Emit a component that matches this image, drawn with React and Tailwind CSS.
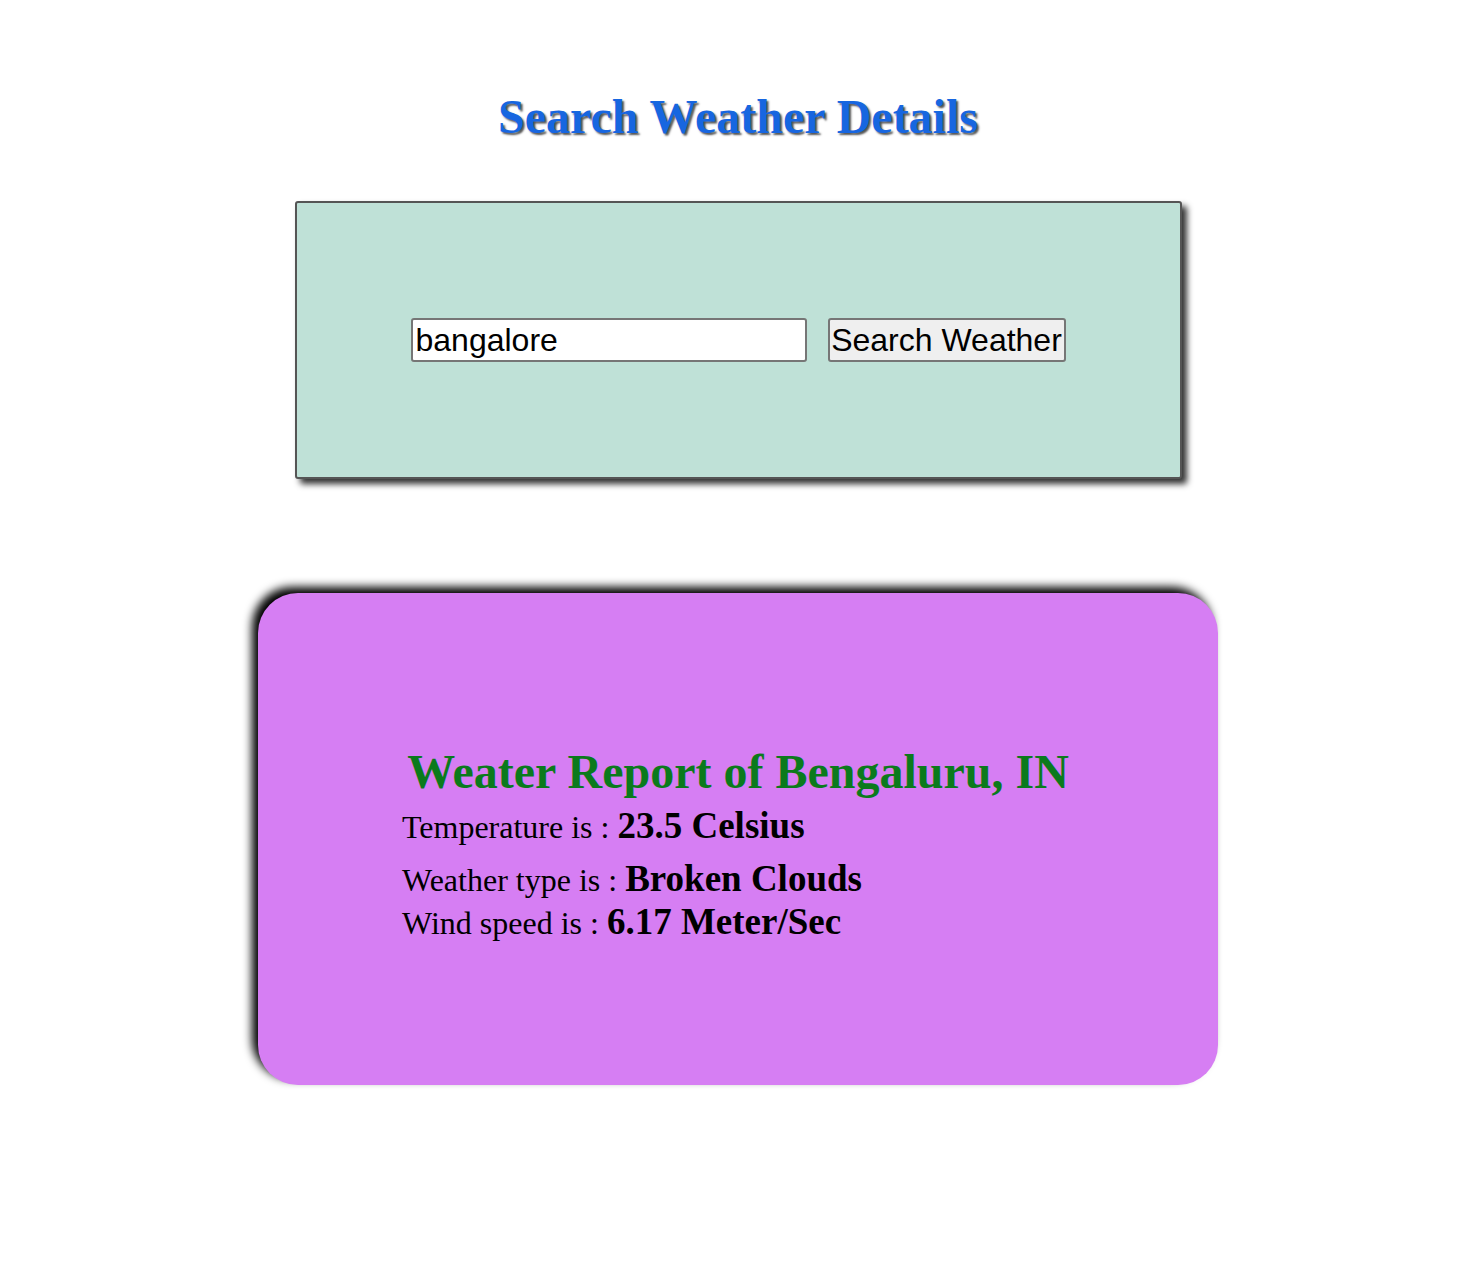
export default function App() {
    return (
        <div className="min-h-screen bg-white pl-4 pt-[89px] font-['Liberation_Serif',serif]">
            <h1 className="text-center text-[48px] leading-[56px] font-bold text-[#1766e0] [text-shadow:2px_2px_2px_#555]">
                Search Weather Details
            </h1>

            <div className="mx-auto mt-[56px] flex h-[278px] w-[887px] items-center justify-center gap-[21px] rounded-[3px] border-2 border-[#555] bg-[#bfe1d7] shadow-[5px_5px_6px_rgba(0,0,0,0.8)]">
                <input
                    type="text"
                    defaultValue="bangalore"
                    className="h-[44px] w-[396px] rounded-[3px] border-2 border-[#767676] bg-white px-[3px] font-['Liberation_Sans',Arial,sans-serif] text-[32px] text-black outline-none"
                />
                <button className="h-[44px] w-[238px] rounded-[3px] border-2 border-[#767676] bg-[#efefef] px-0 font-['Liberation_Sans',Arial,sans-serif] text-[32px] leading-none text-black">
                    Search Weather
                </button>
            </div>

            <div className="mx-auto mt-[114px] h-[492px] w-[960px] rounded-[40px] bg-[#d67ef3] px-[144px] pt-[151px] shadow-[-6px_-6px_10px_#000]">
                <h2 className="text-center text-[48px] leading-[56px] font-bold text-[#0b7a1c]">
                    Weater Report of Bengaluru, IN
                </h2>
                <p className="mt-[4px] text-[32px] leading-[44px] text-black">
                    Temperature is : <span className="text-[37px] font-bold">23.5 Celsius</span>
                </p>
                <p className="mt-[8px] text-[32px] leading-[44px] text-black">
                    Weather type is : <span className="text-[37px] font-bold">Broken Clouds</span>
                </p>
                <p className="text-[32px] leading-[40px] text-black">
                    Wind speed is : <span className="text-[37px] font-bold">6.17 Meter/Sec</span>
                </p>
            </div>
        </div>
    );
}
